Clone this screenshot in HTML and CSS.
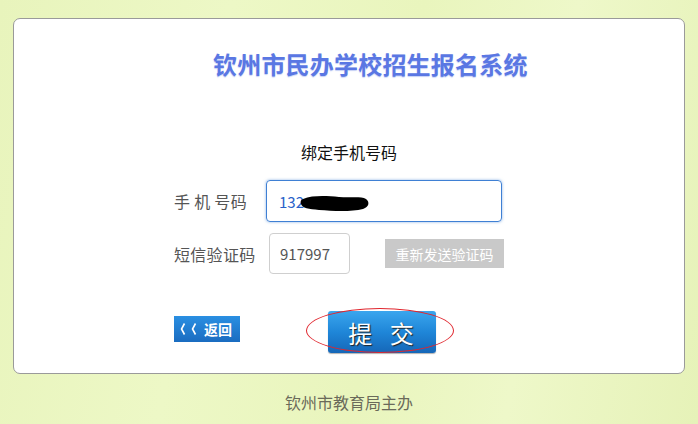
FILE: index.html
```html
<!DOCTYPE html>
<html lang="zh">
<head>
<meta charset="utf-8">
<title>钦州市民办学校招生报名系统</title>
<link rel="stylesheet" href="styles.css">
</head>
<body>
<div class="card">
  <h1 class="title">钦州市民办学校招生报名系统</h1>
  <div class="subtitle">绑定手机号码</div>
  <div class="row row-phone">
    <span class="label">手 机 号码</span>
    <div class="input input-phone"><span class="phone-text">132</span><svg class="scribble" width="72" height="20" viewBox="0 0 72 20"><path d="M4 6 C14 2 28 3 40 4 C52 5 62 3 67 6 C71 9 70 14 64 16 C52 19 34 18 20 17 C10 16 3 15 2 11 C1 8 2 7 4 6 Z" fill="#000"/></svg></div>
  </div>
  <div class="row row-code">
    <span class="label">短信验证码</span>
    <div class="input input-code">917997</div>
    <div class="resend">重新发送验证码</div>
  </div>
  <div class="row row-actions">
    <div class="back"><svg class="chev" width="20" height="12" viewBox="0 0 20 12"><path d="M4.5 0.5 L1.5 6 L4.5 11.5 M15.5 0.5 L12.5 6 L15.5 11.5" fill="none" stroke="#fff" stroke-width="1.6"/></svg>返回</div>
    <div class="submit-wrap">
      <div class="submit">提&nbsp;交</div>
      <span class="ring"></span>
    </div>
  </div>
</div>
<div class="footer">钦州市教育局主办</div>
</body>
</html>
```
FILE: styles.css
```css
html, body {
  margin: 0;
  padding: 0;
}
body {
  width: 698px;
  height: 424px;
  overflow: hidden;
  font-family: "Noto Sans CJK SC", "Noto Sans", sans-serif;
  background: linear-gradient(100deg, #e8f4bc 0%, #edf8c6 30%, #e9f5bd 55%, #eef8c9 75%, #e6f2b8 100%);
}
.card {
  margin: 18px 13px 0 13px;
  height: 356px;
  box-sizing: border-box;
  border: 1px solid #9a9a9a;
  border-radius: 7px;
  background: #fff;
  padding-top: 29px;
}
.title {
  margin: 0;
  padding-left: 199px;
  font-size: 24px;
  line-height: 32px;
  font-weight: bold;
  color: #5a77e3;
  letter-spacing: 0.2px;
  text-shadow: 0 1px 1px rgba(90, 119, 227, 0.35);
}
.subtitle {
  margin-top: 62px;
  text-align: center;
  font-size: 16px;
  line-height: 20px;
  color: #111;
}
.row {
  display: flex;
  align-items: center;
  padding-left: 160px;
}
.row-phone {
  margin-top: 18px;
}
.row-code {
  margin-top: 11px;
}
.label {
  font-size: 16px;
  color: #555;
  letter-spacing: 0.3px;
}
.row-phone .label {
  width: 92px;
}
.row-code .label {
  width: 95px;
}
.input {
  box-sizing: border-box;
  display: flex;
  align-items: center;
  font-size: 15px;
  color: #555;
  border-radius: 4px;
}
.input-phone {
  width: 236px;
  height: 42px;
  border: 1px solid #3f80d4;
  box-shadow: 0 0 3px rgba(63, 128, 212, 0.6);
  padding-left: 12px;
}
.phone-text {
  color: #2a62c9;
}
.scribble {
  margin-left: -5px;
  margin-top: 3px;
}
.input-code {
  width: 81px;
  height: 41px;
  border: 1px solid #cfcfcf;
  padding-left: 10px;
}
.resend {
  margin-left: 35px;
  width: 119px;
  height: 29px;
  background: #c9c9c9;
  color: #fff;
  font-size: 14px;
  display: flex;
  align-items: center;
  justify-content: center;
}
.row-actions {
  margin-top: 37px;
  align-items: flex-start;
}
.back {
  margin-top: 5px;
  width: 66px;
  height: 26px;
  box-sizing: border-box;
  background: linear-gradient(#2a8fe2, #1a6cc0);
  color: #fff;
  font-size: 14px;
  font-weight: bold;
  display: flex;
  align-items: center;
  padding-left: 6px;
  white-space: nowrap;
}
.chev {
  display: block;
  margin-right: 4px;
}
.submit-wrap {
  position: relative;
  margin-left: 88px;
}
.submit {
  width: 108px;
  height: 42px;
  border-radius: 3px;
  background: linear-gradient(#3aa6ee, #1f86d8 50%, #1567b8);
  color: #fff;
  font-size: 24px;
  letter-spacing: 6px;
  padding-left: 4px;
  box-sizing: border-box;
  display: flex;
  align-items: center;
  justify-content: center;
  text-shadow: 1px 1px 1px #222;
  box-shadow: 0 1px 1px rgba(0, 0, 0, 0.3);
}
.ring {
  position: absolute;
  left: -22px;
  top: -3px;
  width: 148px;
  height: 45px;
  box-sizing: border-box;
  border: 1px solid #e0262e;
  border-radius: 50%;
}
.footer {
  margin-top: 17px;
  text-align: center;
  font-size: 16px;
  line-height: 22px;
  color: #6a6a5a;
}
```
